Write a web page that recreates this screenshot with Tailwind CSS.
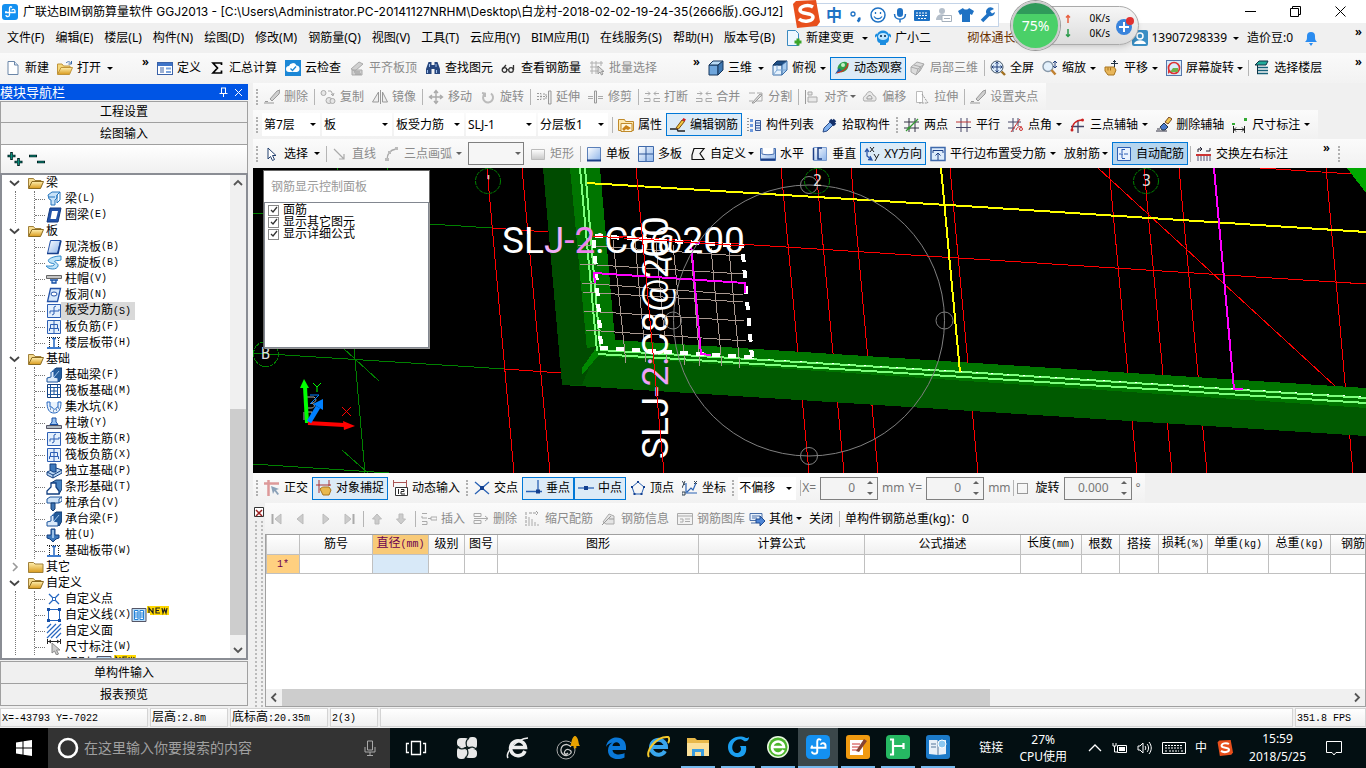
<!DOCTYPE html>
<html lang="zh-CN">
<head>
<meta charset="utf-8">
<title>广联达BIM钢筋算量软件 GGJ2013</title>
<script src="https://cdn.jsdelivr.net/npm/@tailwindcss/browser@4"></script>
</head>
<body class="relative flex h-screen flex-col overflow-hidden bg-[#f0f0f0] font-['Noto_Sans','Noto_Sans_CJK_SC',sans-serif] text-xs leading-4 text-black">

<svg class="absolute h-0 w-0" aria-hidden="true">
  <defs>
    <linearGradient id="gb" x1="0" y1="0" x2="1" y2="1"><stop offset="0" stop-color="#fff"/><stop offset="1" stop-color="#8db4ea"/></linearGradient>
    <linearGradient id="gy" x1="0" y1="0" x2="0" y2="1"><stop offset="0" stop-color="#fff0b0"/><stop offset="1" stop-color="#d99a1c"/></linearGradient>
    <linearGradient id="gg" x1="0" y1="0" x2="0" y2="1"><stop offset="0" stop-color="#ffffff"/><stop offset="1" stop-color="#c8c8c8"/></linearGradient>
  </defs>
  <symbol id="app" viewBox="0 0 16 16"><rect width="16" height="16" rx="3" fill="#1490f0"/><path d="M10 3.500C8.500 2 7.500 3 7.500 4.500V11c0 2-3.500 2-3.500 0M3 8.500h10V7c0-2-3-2-3-.5M4 8.500V7" fill="none" stroke="#fff" stroke-width="1.300"/></symbol>
  <symbol id="new" viewBox="0 0 16 16"><path d="M3 1.500h6.500l3.500 3.500v9.500H3z" fill="#fff" stroke="#6b86a8"/><path d="M9.500 1.500V5H13" fill="#dce8f6" stroke="#6b86a8"/></symbol>
  <symbol id="open" viewBox="0 0 16 16"><path d="M.5 14V4h4.500l1.500 2H13v2" fill="#f5d77a" stroke="#c0943a"/><path d="M.5 14.500 4 7.500h11.500L12.500 14.500z" fill="url(#gy)" stroke="#c0943a"/><path d="M9 3c2-2 4-1.500 5 .5M14.500 1v3h-3" fill="none" stroke="#3a6aa8"/></symbol>
  <symbol id="def" viewBox="0 0 16 16"><rect x=".5" y="2.500" width="15" height="12" fill="#fff" stroke="#3a62a8"/><path d="M1 3h14v3H1z" fill="#3f74c8"/><path d="M3 8h4M3 10h4M3 12h4" stroke="#3a62a8"/><path d="M9 7.500h5v2H9zM9 11h5v2H9z" fill="#7ba4dc"/></symbol>
  <symbol id="sigma" viewBox="0 0 16 16"><path d="M12.500 5V3H4l4.500 5L4 13h8.500v-2.500" fill="none" stroke="#000" stroke-width="1.700"/></symbol>
  <symbol id="cloud" viewBox="0 0 16 16"><rect width="16" height="16" fill="#1b87d6"/><path d="M4 12a3 3 0 0 1 0-6 4 4 0 0 1 7.500-.5A3.300 3.300 0 0 1 12 12z" fill="#fff"/><path d="m5.500 8.500 2 2 3.500-4" fill="none" stroke="#1b87d6" stroke-width="1.300"/></symbol>
  <symbol id="align" viewBox="0 0 16 16"><path d="m2 9 8-7 4 2-8 7zM3 10h10v5H3z" fill="#d0d0d0" stroke="#aaa"/><path d="M5 12h6M6 14h6" stroke="#999"/></symbol>
  <symbol id="bino" viewBox="0 0 16 16"><path d="M3.500 2h3v3h3V2h3l2.500 7v5H9.500V9h-3v5H1V9z" fill="#28477e"/><path d="M2.500 10v3M11.500 10v3M4.500 4v3M11 4v3" stroke="#9fc0ee"/></symbol>
  <symbol id="glass" viewBox="0 0 16 16"><g fill="none" stroke="#333" stroke-width="1.300"><circle cx="3.500" cy="10" r="2.300"/><circle cx="10" cy="10" r="2.300"/><path d="M6 9.500 7.500 10M1.500 9 5 5M12.500 10V5"/></g></symbol>
  <symbol id="batch" viewBox="0 0 16 16"><path d="M1 3h13M1 7h8M1 11h8M3 1v13M7 1v13M12 1v5" fill="none" stroke="#b0b0b0"/><path d="M9 6v8l2-2 1.500 3 1.500-1-1.500-2.500H15z" fill="#ddd" stroke="#999"/></symbol>
  <symbol id="cube" viewBox="0 0 16 16"><path d="M1 5h9v10H1z" fill="#6fa6dc" stroke="#16365c"/><path d="m1 5 4-4h10l-5 4z" fill="#b9dbf6" stroke="#16365c"/><path d="m10 5 5-4v9l-5 5z" fill="#3f78b2" stroke="#16365c"/></symbol>
  <symbol id="cube2" viewBox="0 0 16 16"><path d="M1 5h9v10H1z" fill="#e6f2fd" stroke="#3a6ea8"/><path d="m1 5 4-4h10l-5 4z" fill="#1e4f86" stroke="#16365c"/><path d="m10 5 5-4v9l-5 5z" fill="#a9cdf0" stroke="#3a6ea8"/><path d="M1 15 5 10h9M5 10V5" fill="none" stroke="#7ba6d4"/></symbol>
  <symbol id="orbit" viewBox="0 0 16 16"><ellipse cx="9" cy="7" rx="6" ry="4.500" transform="rotate(-40 9 7)" fill="#2fa04a"/><circle cx="9" cy="5" r="2" fill="#c5f0c5"/><path d="M1 14 5 8l3 3z" fill="#1d5ca8"/><path d="M3 13C9 12 14 8 14 3" fill="none" stroke="#cc3322" stroke-width="1.200"/></symbol>
  <symbol id="cubeg" viewBox="0 0 16 16"><g fill="#dcdcdc" stroke="#aaa"><path d="M1 7 7 2l7 2-4 7-4 4-5-3z"/><path d="m1 7 7 2 6-5M8 9l-2 6M4 5l7 2-3 6" fill="none"/></g></symbol>
  <symbol id="full" viewBox="0 0 16 16"><circle cx="7" cy="7" r="6" fill="#dcecfb" stroke="#456"/><path d="M7 2v10M2 7h10M5.500 3.500 7 2l1.500 1.500M5.500 10.500 7 12l1.500-1.500M3.500 5.500 2 7l1.500 1.500M10.500 5.500 12 7l-1.500 1.500" fill="none" stroke="#23407c"/><path d="m11.500 11.500 3.500 3.500" stroke="#a07020" stroke-width="2.400"/></symbol>
  <symbol id="zoom" viewBox="0 0 16 16"><circle cx="6" cy="6.500" r="5" fill="#e4f1fc" stroke="#8899aa" stroke-width="1.400"/><path d="m9.500 10 4 4.500" stroke="#c08030" stroke-width="2.500"/><path d="M13 1v7M11 3l2-2 2 2M11 6l2 2 2-2" fill="none" stroke="#23407c"/></symbol>
  <symbol id="pan" viewBox="0 0 16 16"><path d="M1 7h9l2 3-2 5H4L1 11z" fill="#e8b65a" stroke="#a8741e"/><path d="M4 7.500v3M6.500 7.500v3" stroke="#a8741e"/><path d="M10.500 0v7M7 3.500h7M9 2l1.500-1.500L12 2" fill="none" stroke="#234"/></symbol>
  <symbol id="srot" viewBox="0 0 16 16"><rect x=".5" y=".5" width="15" height="15" fill="#d8ecfb" stroke="#57a"/><circle cx="8" cy="8" r="5.500" fill="none" stroke="#d33" stroke-width="1.700"/><path d="M4 12 7 8h5v4z" fill="#6cb34a"/><path d="m2 10 3 1-3 3z" fill="#d33"/></symbol>
  <symbol id="floor" viewBox="0 0 16 16"><path d="m1 5 4-4h9l-2 4z" fill="#2a9" stroke="#134"/><path d="M3 7.500h11M3 10.500h11M3 13.500h11" stroke="#146078" stroke-width="1.500"/><path d="M3.500 5v9" stroke="#134"/></symbol>
  <symbol id="pencil" viewBox="0 0 16 16"><path d="M0 14h10M1 12.500h3" stroke="#999"/><path d="m6 10 7-8 3-1-1 4-7 7z" fill="#d0d0d0" stroke="#999"/></symbol>
  <symbol id="copy" viewBox="0 0 16 16"><g fill="#e6e6e6" stroke="#aaa"><circle cx="3.500" cy="4" r="2.500"/><circle cx="9" cy="11.500" r="3"/><circle cx="12.500" cy="12" r="2.500"/></g><path d="M8 2h3l2 4M11 5l2 2 1-3" fill="none" stroke="#aaa"/></symbol>
  <symbol id="mirror" viewBox="0 0 16 16"><path d="M6.500 3v10h-6zM10.500 3v10h5z" fill="#eee" stroke="#999"/><path d="M8.500 1v14" stroke="#999"/></symbol>
  <symbol id="move" viewBox="0 0 16 16"><path d="M8 2v12M2 8h12M6 4l2-2.500L10 4M6 12l2 2.500 2-2.500M4 6 1.500 8 4 10M12 6l2.500 2L12 10" fill="none" stroke="#aaa" stroke-width="1.400"/></symbol>
  <symbol id="rot" viewBox="0 0 16 16"><path d="M4.500 5a5 5 0 1 0 6.500-.5M2 4l3 .5V8" fill="none" stroke="#bbb" stroke-width="2"/></symbol>
  <symbol id="extend" viewBox="0 0 16 16"><path d="M1 7.500h10M1 4.500h4v6H1M7 5h3v5H7" fill="none" stroke="#999" stroke-dasharray="2 1"/><path d="M12.500 2h2.500v13h-2.500z" fill="#eee" stroke="#999"/></symbol>
  <symbol id="trim" viewBox="0 0 16 16"><path d="M0 7.500h5M0 9.500h5M10 7.500h5M10 9.500h5" stroke="#aaa"/><path d="M6.500 2h2v12h-2z" fill="#eee" stroke="#999"/></symbol>
  <symbol id="brk" viewBox="0 0 16 16"><path d="M0 9.500h6v3H0M16 9.500h-6v3h6M1 4.500h5M4 2.500l2 2-2 2M15 4.500h-5M12 2.500l-2 2 2 2" fill="none" stroke="#aaa"/></symbol>
  <symbol id="split" viewBox="0 0 16 16"><path d="M1 4h6M9 4h5v8H8M1 12h4" fill="none" stroke="#aaa"/><path d="m4 14 8-9 2 1-8 8z" fill="#ddd" stroke="#999"/></symbol>
  <symbol id="alg" viewBox="0 0 16 16"><path d="M1.500 1v14" stroke="#999"/><path d="M4 3h4v3H4zM4 8h9v5H4z" fill="#e8e8e8" stroke="#aaa"/></symbol>
  <symbol id="offs" viewBox="0 0 16 16"><path d="M2 12c-2-4 1-5 2-6 2-5 6-4 7 0 3 1 4 4 2 6z" fill="#e8e8e8" stroke="#aaa"/><path d="M5 10c-1-3 5-6 5 0z" fill="none" stroke="#999"/></symbol>
  <symbol id="stretch" viewBox="0 0 16 16"><path d="M2.500 2.500h6v11h-6z" fill="#fff" stroke="#bbb"/><path d="m8 5 6 9H5" fill="none" stroke="#999" stroke-dasharray="2 1"/></symbol>
  <symbol id="prop" viewBox="0 0 16 16"><path d="M.5 2.500h6l1 2h8v9H.5z" fill="#ffe9b0" stroke="#c08a2a"/><path d="M3 6.500h11v8H3z" fill="#fff7dd" stroke="#c08a2a"/><path d="m4 12 4-4 5 3-3 2-2-1-2 2z" fill="#c98218"/></symbol>
  <symbol id="edit" viewBox="0 0 16 16"><path d="M0 12h7l1 2h7" fill="none" stroke="#222" stroke-width="1.300"/><path d="m6 11 6-8 2.500 1.500L8.500 12z" fill="#f3c63f" stroke="#7a4c10"/><path d="m12 3 1.500-2L16 2.500 14.500 4.500z" fill="#c22"/></symbol>
  <symbol id="list" viewBox="0 0 16 16"><path d="M2 1v14" stroke="#333" stroke-dasharray="1 2"/><path d="M4 2h3v3H4zM4 7h3v3H4zM4 12h3v3H4z" fill="#6f9be0"/><path d="M9.500 3.500h5v10h-5z" fill="#dce9fb" stroke="#36589a"/><path d="M10 6h4M10 8.500h4M10 11h4" stroke="#36589a"/></symbol>
  <symbol id="pick" viewBox="0 0 16 16"><path d="m1 15 1-4 6-6 3 3-6 6z" fill="#7fb0ee" stroke="#2a4a86"/><path d="m8 3 5 5M9.500 6.500 13 3" stroke="#14306a" stroke-width="3.500"/></symbol>
  <symbol id="ax2" viewBox="0 0 16 16"><path d="M5 1v14M11 1v14M0 5h15M0 11h15" stroke="#334"/><path d="m2 14 12-12" stroke="#393" stroke-width="1.300"/><circle cx="5" cy="11" r="1.500" fill="#393"/></symbol>
  <symbol id="axp" viewBox="0 0 16 16"><path d="M5 1v14M11 1v14M0 10.500h15" stroke="#446"/><path d="M0 5h15" stroke="#b33"/></symbol>
  <symbol id="axa" viewBox="0 0 16 16"><path d="M5 1v14M10 1v8M0 5h13M0 11h7" stroke="#446"/><path d="m3 15 9-13M8 13c1-3 3-4 6-3" fill="none" stroke="#c33"/><circle cx="13" cy="12" r="1.500" fill="none" stroke="#c33"/></symbol>
  <symbol id="ax3" viewBox="0 0 16 16"><path d="M8 3v13M1 9.500h13" stroke="#446" stroke-width="1.300"/><path d="M2 13C2 7 6 3 12 3" fill="none" stroke="#c22" stroke-width="1.300"/><circle cx="12.500" cy="3" r="1.500" fill="#c22"/><circle cx="2" cy="13" r="1.500" fill="#c22"/></symbol>
  <symbol id="axd" viewBox="0 0 16 16"><path d="M0 14h11M1 12h3" stroke="#334"/><path d="m4 10 4-4 4 4-3 3H6z" fill="#4a7acb" stroke="#234"/><path d="m9 5 4-5 3 2-4 5z" fill="#f0c650" stroke="#742"/></symbol>
  <symbol id="dim" viewBox="0 0 16 16"><path d="M1.500 9v7M12.500 9v7M2 12.500h10M4 10.500l-2 2 2 2M10 10.500l2 2-2 2" fill="none" stroke="#222"/><path d="M0 6h3v2H0zM12 1h3v3h-3z" fill="#3a3"/></symbol>
  <symbol id="cursor" viewBox="0 0 16 16"><path d="M4 2v11l2.500-2.500 2 4 2-1-2-4H12z" fill="#fff" stroke="#23406e"/></symbol>
  <symbol id="line" viewBox="0 0 16 16"><path d="m2 3 10 10M12 8v5H7" fill="none" stroke="#aaa" stroke-width="1.200"/></symbol>
  <symbol id="arc" viewBox="0 0 16 16"><path d="M3 14C3 8 6 4 12 3" fill="none" stroke="#aaa" stroke-width="1.300"/><path d="M1 12h4v3H1zM11 1h3v3h-3zM4 5h3v3H4z" fill="#bbb"/></symbol>
  <symbol id="rect" viewBox="0 0 16 16"><path d="M1.500 3.500h13v10h-13z" fill="url(#gg)" stroke="#bbb"/></symbol>
  <symbol id="slab" viewBox="0 0 16 16"><path d="M1.500 1.500h13v13h-13z" fill="url(#gb)" stroke="#5a7fb8"/><path d="M1 14.500h14" stroke="#1d3f86" stroke-width="2"/></symbol>
  <symbol id="slabs" viewBox="0 0 16 16"><path d="M.5.5h15v15H.5z" fill="url(#gb)" stroke="#3f6aac"/><path d="M8 1v14M1 8h14" stroke="#2d5596"/></symbol>
  <symbol id="poly" viewBox="0 0 16 16"><path d="M4 2.500h10l-4 5 4 6H2V9z" fill="none" stroke="#111" stroke-width="1.200"/></symbol>
  <symbol id="hor" viewBox="0 0 16 16"><path d="M.5 2.500h15v12H.5z" fill="url(#gb)" stroke="#3f6aac"/><path d="M2 2v6c4 1 8 1 12 0V2" fill="#fff" stroke="#4a70b0"/><path d="M1 13.500h14" stroke="#1d3f86" stroke-width="2"/></symbol>
  <symbol id="ver" viewBox="0 0 16 16"><path d="M1.500 1.500h13v13h-13z" fill="url(#gb)" stroke="#7a9cd0"/><path d="M10 2H6v11h4M1.500 2v12" fill="none" stroke="#1d3f86" stroke-width="1.500"/></symbol>
  <symbol id="xy" viewBox="0 0 16 16"><path d="M3 4v6l5 4M1 6l2-3 2 3M6 10l2 4-4-.5" fill="none" stroke="#2a55a8" stroke-width="1.300"/><path d="m6 1 4 5M10 1 6 6M10 8l2.500 4M15 8l-4 7" stroke="#222"/></symbol>
  <symbol id="par" viewBox="0 0 16 16"><path d="M1 1.500h14v13H1z" fill="#dcebfb" stroke="#3f6aac" stroke-width="1.500"/><path d="M3 7V4.500h10V7M8 7v7M5.500 9.500 8 7l2.500 2.500" fill="none" stroke="#1d3f86"/></symbol>
  <symbol id="auto" viewBox="0 0 16 16"><path d="M1.500 1.500h13v13h-13z" fill="#e8f3ff" stroke="#2d5fb4"/><path d="M6 3v10M3 8h9M6 3.500h3M6 12.500h3" fill="none" stroke="#2d5fb4" stroke-dasharray="4 1"/></symbol>
  <symbol id="swap" viewBox="0 0 16 16"><path d="M2 6V3h4M10 5h4V2M4 1l2 2-2 2" fill="none" stroke="#223"/><path d="M0 9h15" stroke="#c33" stroke-width="2"/><path d="M2 10v5M5 10v5M8 10v5M11 10v5M14 10v5" stroke="#557"/></symbol>
  <symbol id="ortho" viewBox="0 0 16 16"><path d="M0 3.500h15M4.500 0v16" stroke="#d99" stroke-width="2.500"/><path d="m7 6 2 8 1.500-3 3 4 1.500-1-3-4 3-1z" fill="#8ba1b8"/></symbol>
  <symbol id="osnap" viewBox="0 0 16 16"><path d="M3 0v13M0 5h15M13 0v6" stroke="#a33"/><path d="M4 9c2-2 3-2 4-2h5l2 3-2 5H7z" fill="#e8b94e" stroke="#a8741e"/></symbol>
  <symbol id="dyn" viewBox="0 0 16 16"><path d="M1.500 0v7M14.500 0v7M1 2.500h14" stroke="#a55"/><path d="M3.500 7.500h12v8h-12z" fill="#fff" stroke="#333"/><path d="M6.500 9v5M9 9.500h3v2H9v2.500h4" fill="none" stroke="#222"/></symbol>
  <symbol id="sx" viewBox="0 0 16 16"><path d="m1 2 14 12M15 2 1 14" stroke="#2a62b4" stroke-width="1.300"/><path d="M6 6h4v4H6z" fill="#123f90"/></symbol>
  <symbol id="sperp" viewBox="0 0 16 16"><path d="M0 11.500h16M12 0v12" stroke="#2a62b4" stroke-width="1.300"/><path d="M10 9.500h4v4h-4z" fill="#123f90"/></symbol>
  <symbol id="smid" viewBox="0 0 16 16"><path d="M0 8h16" stroke="#2a62b4" stroke-width="1.300"/><path d="M6 6h4v4H6z" fill="#123f90"/></symbol>
  <symbol id="spent" viewBox="0 0 16 16"><path d="m8 2 6 5-2.500 7h-7L2 7z" fill="none" stroke="#2a62b4"/><path d="M7 1h2v2H7zM1 6h2v2H1zM13 6h2v2h-2zM3.500 13h2v2h-2zM10.500 13h2v2h-2z" fill="#123f90"/></symbol>
  <symbol id="scoord" viewBox="0 0 16 16"><path d="M4 3v10h11M5 12l4-4 2 2 3-7" fill="none" stroke="#2a62b4" stroke-width="1.200"/><path d="m0 1 3 4M3 1 0 8M12 1l3 3M15 1l-3 3M0 12h3v3H0z" fill="none" stroke="#345"/></symbol>
  <symbol id="ins" viewBox="0 0 16 16"><path d="M1 2.500h5M1 5v2h5M1 10.500h5v3H1M10 6h6v3h-6zM7 7.500h3" fill="none" stroke="#aaa"/></symbol>
  <symbol id="del" viewBox="0 0 16 16"><path d="M1 2.500h7v3H1zM1 9.500h7v3H1zM1 7.500h14M12 5l3 2.500-3 2.500" fill="none" stroke="#aaa"/></symbol>
  <symbol id="scale" viewBox="0 0 16 16"><path d="M1 1v14M4 2h9M11 0l2 2-2 2" fill="none" stroke="#999" stroke-dasharray="3 1"/><path d="M4 6v9M7 8v7M10 11v4M13 13v2" stroke="#aaa"/></symbol>
  <symbol id="info" viewBox="0 0 16 16"><path d="m2 11 6-8 5 2v8H5z" fill="#e4e4e4" stroke="#aaa"/><path d="m1 14 9-9M8 8h5" stroke="#999"/></symbol>
  <symbol id="lib" viewBox="0 0 16 16"><path d="M.5 2.500h15v11H.5z" fill="#f2f2f2" stroke="#aaa"/><path d="M1 5h14M3 8h3v3H3M8 8h5M8 10.500h5" fill="none" stroke="#aaa"/></symbol>
  <symbol id="other" viewBox="0 0 16 16"><path d="M1 2.500h12v7H1z" fill="#e8f1fc" stroke="#4a6fa8"/><path d="M3 5h8M3 7h5M2 12h5" stroke="#4a6fa8"/><path d="M7 8h4V5l5 5-5 5v-3H7z" fill="#4f86d6" stroke="#1f4b92"/></symbol>
  <symbol id="first" viewBox="0 0 16 16"><path d="M3.500 3v10" stroke="#aaa" stroke-width="2"/><path d="M12 3v10L6 8z" fill="#ccc" stroke="#bbb"/></symbol>
  <symbol id="prev" viewBox="0 0 16 16"><path d="M10 3v10L4 8z" fill="#ccc" stroke="#bbb"/></symbol>
  <symbol id="up" viewBox="0 0 16 16"><path d="m8 3 4.500 5H10v5H6V8H3.500z" fill="#ccc" stroke="#bbb"/></symbol>

  <symbol id="fo" viewBox="0 0 16 16"><path d="M.5 13V3.500h5l1.500 2h6V8" fill="#f6dc90" stroke="#a0803a"/><path d="M.5 13.500 4 6.500h11.500L12.500 13.500z" fill="url(#gy)" stroke="#8a6a20"/></symbol>
  <symbol id="fc" viewBox="0 0 16 16"><path d="M.5 13.500V3.500h5l1.500 1.500h8v8.500z" fill="url(#gy)" stroke="#a0803a"/></symbol>
  <symbol id="t-beam" viewBox="0 0 16 16"><path d="m2 4 4-3h8l-3 3v3L9 9v5H5V9L3 8z" fill="#c8e2f8" stroke="#2475bd"/><path d="M11 4v8l3-3V1M3 6h6" fill="none" stroke="#2475bd"/></symbol>
  <symbol id="t-ring" viewBox="0 0 16 16"><path d="M4 1h11l-3 14H1z" fill="#2352a8" stroke="#123a80"/><path d="M6 4h6l-2 8H4.500z" fill="#fff"/></symbol>
  <symbol id="t-slab" viewBox="0 0 16 16"><path d="M4.500 1.500h10l-3 13h-10z" fill="url(#gb)" stroke="#2352a8"/><path d="M1 14.500h11l3-13" fill="none" stroke="#173f8c" stroke-width="1.500"/></symbol>
  <symbol id="t-spiral" viewBox="0 0 16 16"><path d="M15 1C8 1 0 4 3 7c2 2 7 1 5 3-1 1.500-5 1-8 1 3 4 11 4 12 0 1-3-5-4-3-5s4 0 6-1z" fill="#bfe4fa" stroke="#2d86c8"/></symbol>
  <symbol id="t-cap" viewBox="0 0 16 16"><path d="M.5 4.500h15v3H.5z" fill="#c4c4c4" stroke="#666"/><path d="M4 9h8M6 9v3h4V9" fill="#cfe3fa" stroke="#174fa5" stroke-width="1.300"/></symbol>
  <symbol id="t-hole" viewBox="0 0 16 16"><path d="M4.500 1.500h10l-3 13h-10z" fill="#d6e8fb" stroke="#2352a8" stroke-width="1.300"/><ellipse cx="8" cy="7" rx="3" ry="2" fill="#fff" stroke="#2352a8"/></symbol>
  <symbol id="t-rebar" viewBox="0 0 16 16"><path d="M1.500 1.500h13v13h-13z" fill="#e4f0fd" stroke="#2d5fb4"/><path d="M8 4v7M4 10.500V8h9v-2M8 4l2-1M6 12l2-1" fill="none" stroke="#2d5fb4"/></symbol>
  <symbol id="t-neg" viewBox="0 0 16 16"><path d="M1.500 1.500h13v13h-13z" fill="#e4f0fd" stroke="#2d5fb4"/><path d="M8 2v12M3.500 12V9.500h9V12M4.500 9V5.500h7V9" fill="none" stroke="#2d5fb4"/></symbol>
  <symbol id="t-band" viewBox="0 0 16 16"><path d="M1 2.500h14M3.500 3v9M12.500 3v9" stroke="#222" stroke-dasharray="1 1"/><path d="M8 3v9M6 3.500h4" stroke="#2466c0" stroke-width="1.500"/><path d="M1 12h14v2H1z" fill="#3f7dd0"/></symbol>
  <symbol id="t-fb" viewBox="0 0 16 16"><path d="m5 7 5-6h6v9l-3 5z" fill="#245d9c" stroke="#143c70"/><path d="M1 15v-4l4-1V5l3-1v6l4 1v4z" fill="#dbeafa" stroke="#1c559c"/><path d="M5 5l4-4M8 10l5-6" stroke="#9fc4ec"/></symbol>
  <symbol id="t-raft" viewBox="0 0 16 16"><path d="M1.500 1.500h13v13h-13z" fill="#fff" stroke="#123f80"/><path d="M4.500 2v12M11.500 2v12M2 4.500h12M2 11.500h12M8 5v6M5 8h6" stroke="#1c559c"/></symbol>
  <symbol id="t-pit" viewBox="0 0 16 16"><path d="M1 3h3v5h2c1 3 4 3 5 0h1V3h3M1 3c0 7 2 11 7 11s7-4 7-11" fill="#eaf3fd" stroke="#2466c0"/><path d="M4 10h1M7 12h1M10 11h1M12 9h1" stroke="#123f80"/></symbol>
  <symbol id="t-pier" viewBox="0 0 16 16"><path d="M.5 10.500h15v3H.5z" fill="#b4bcc4" stroke="#556"/><path d="m4 9.500 2-2.500V3h4v4l2 2.500z" fill="#9cc4f2" stroke="#174fa5"/></symbol>
  <symbol id="t-iso" viewBox="0 0 16 16"><path d="M1 9v3l6 3 9-5V7l-6-2z" fill="#bcd8f4" stroke="#123f80"/><path d="M4 1h6v8H7L4 7z" fill="#3e78bb" stroke="#123f80"/><path d="m1 9 6 3 9-5M7 12v3" fill="none" stroke="#123f80"/></symbol>
  <symbol id="t-strip" viewBox="0 0 16 16"><path d="m5 4 5-3h6v9l-3 5z" fill="#4681c0" stroke="#143c70"/><path d="M5 4h5v4l3 4v3H1v-3l4-4z" fill="#fff" stroke="#123f80" stroke-width="1.300"/></symbol>
  <symbol id="t-pc" viewBox="0 0 16 16"><path d="m1 4 3-2h12l-3 2v4H1z" fill="#d0e4f8" stroke="#1c559c"/><path d="M5 8h4v6l-2 2-2-2z" fill="#3f76b6" stroke="#143c70"/><path d="m13 8 3-2V2" fill="none" stroke="#1c559c"/></symbol>
  <symbol id="t-pile" viewBox="0 0 16 16"><path d="M5 2h4v6h4v3l-3 1-3 3-3-3-3-1V8h4z" fill="#3e78bb" stroke="#123f80"/><path d="M7 3v8" stroke="#bcd8f4" stroke-width="1.500"/></symbol>
  <symbol id="t-pt" viewBox="0 0 16 16"><path d="m3 3 10 10M13 3 3 13" stroke="#2466c0" stroke-width="1.300"/><path d="M6.500 6.500h3v3h-3z" fill="#fff" stroke="#2466c0"/></symbol>
  <symbol id="t-ln" viewBox="0 0 16 16"><path d="M2.500 2.500h11v11h-11z" fill="none" stroke="#2466c0"/><path d="M1 1h3v3H1zM12 1h3v3h-3zM1 12h3v3H1zM12 12h3v3h-3z" fill="#174fa5"/></symbol>
  <symbol id="t-area" viewBox="0 0 16 16"><path d="m1 5 4-4M1 10l9-9M1 15 15 1M5 15l10-10M10 15l5-5" stroke="#2466c0" stroke-width="1.200"/></symbol>
  <symbol id="t-dim" viewBox="0 0 16 16"><path d="M1.500 0v5M14.500 0v5M2 2.500h12M5 1 3 2.500 5 4M11 1l2 1.500L11 4" fill="none" stroke="#222"/><path d="M6 4v10l2.500-2 2 4 2-1-2-4H14z" fill="#ccc" stroke="#888"/></symbol>
  <symbol id="t-vid" viewBox="0 0 16 16"><path d="M1 1.500h14v13H1z" fill="#b9dcf8" stroke="#556"/><path d="M3.500 3.500h3.500v9H3.500zM9 3.500h3.500v9H9z" fill="#fff" stroke="#2080d8"/><path d="M4 6h3M4 8h3M4 10h3M9 6h3M9 8h3M9 10h3" stroke="#2080d8"/></symbol>
  <symbol id="t-new" viewBox="0 0 22 10"><path d="M0 0h22v9H3V7H0z" fill="#ffd800"/><path d="M2 7V2l4 5V2M13 2H9v5h4M9 4.500h3M15 2l1 5 1.500-4L19 7l1-5" fill="none" stroke="#222" stroke-width="1.200"/></symbol>
  <symbol id="sogou" viewBox="0 0 28 28"><path d="m1 4 3-3 20-1 4 22-3 4-20 2z" fill="#e84f1c"/><path d="M21 7C16 4 8 6 8 10c0 5 13 2 13 7 0 4-9 6-14 2" fill="none" stroke="#fff" stroke-width="3.500"/></symbol>
</svg>

<!-- Title bar -->
<header class="flex h-[23px] shrink-0 items-center bg-white pl-0.5 pr-5">
  <svg class="mr-[5px] size-4"><use href="#app"/></svg>
  <h1 class="flex-1 whitespace-nowrap font-['Inter','Noto_Sans_CJK_SC',sans-serif]">广联达BIM钢筋算量软件 GGJ2013 - [C:\Users\Administrator.PC-20141127NRHM\Desktop\白龙村-2018-02-02-19-24-35(2666版).GGJ12]</h1>
  <div class="flex gap-[34px] [&_svg]:size-[11px]">
    <button aria-label="最小化"><svg viewBox="0 0 11 11"><path d="M0 5.500h11" stroke="#000"/></svg></button>
    <button aria-label="还原"><svg viewBox="0 0 11 11"><path d="M.5 2.500h8v8h-8zM2.500 2V.5h8v8H9" fill="none" stroke="#000"/></svg></button>
    <button aria-label="关闭"><svg viewBox="0 0 11 11"><path d="m.5.5 10 10M10.500.5l-10 10" stroke="#000"/></svg></button>
  </div>
</header>

<!-- Menu bar -->
<nav class="flex h-[30px] shrink-0 items-center gap-[11px] whitespace-nowrap pl-[7px] [&_i]:border-x-[3px] [&_i]:border-t-[3px] [&_i]:border-x-transparent [&_i]:border-t-black">
  <button>文件(F)</button><button>编辑(E)</button><button>楼层(L)</button><button>构件(N)</button><button>绘图(D)</button><button>修改(M)</button><button>钢筋量(Q)</button><button>视图(V)</button><button>工具(T)</button><button>云应用(Y)</button><button>BIM应用(I)</button><button>在线服务(S)</button><button>帮助(H)</button><button>版本号(B)</button>
  <button class="flex items-center gap-1"><svg class="size-4" viewBox="0 0 16 16"><path d="M1.500.5h8l3 3v12h-11z" fill="#eef7ff" stroke="#3a8ac0"/><path d="M8.500 12h7M12 8.500v7" stroke="#3aa52a" stroke-width="3"/></svg>新建变更<i class="ml-1"></i></button>
  <button class="-ml-1 flex items-center gap-1"><svg class="size-4" viewBox="0 0 16 16"><path d="M2 5C3-1 13-1 14 5v4c0 3-2 4-3 4v2H5v-2c-1 0-3-1-3-4z" fill="#1b8de0"/><path d="M0 7l2-3M16 7l-2-3" stroke="#1b8de0" stroke-width="2"/><ellipse cx="8" cy="6.500" rx="5" ry="3.500" fill="#bfe6ff"/><circle cx="6" cy="6" r="1" fill="#024"/><circle cx="10" cy="6" r="1" fill="#024"/></svg>广小二</button>
  <div class="ml-auto flex items-center gap-1 pr-1">
    <a href="#" class="mr-[100px] text-[#6a3000]">砌体通长筋</a>
    <svg class="size-4" viewBox="0 0 16 16"><rect width="16" height="16" rx="2" fill="#3b8fc4"/><circle cx="8" cy="6" r="3" fill="none" stroke="#fff" stroke-width="1.500"/><path d="M2 14c1-5 11-5 12 0z" fill="#fff"/></svg>
    <button class="flex items-center gap-1.5">13907298339<i></i></button>
    <span class="ml-1">造价豆:0</span>
    <svg class="ml-1.5 size-4" viewBox="0 0 16 16"><path d="M2 12c2-2 2-3 2-6a4 4 0 0 1 8 0c0 3 0 4 2 6z" fill="#2a8cf0"/><path d="M6 13h4l-2 3z" fill="#2a8cf0"/></svg>
    <button class="mb-3 ml-8 font-semibold" aria-label="更多">»</button>
  </div>
</nav>

<!-- Main toolbar -->
<div class="flex h-[30px] shrink-0 items-center whitespace-nowrap bg-gradient-to-b from-[#fafafa] to-[#f2f2f2] [&_button]:flex [&_button]:h-[23px] [&_button]:items-center [&_button]:gap-1 [&_button]:border [&_button]:border-transparent [&_button]:px-[3px] [&_button:disabled]:text-[#8b8b8b] [&_button[aria-pressed=true]]:border-[#0078d7] [&_button[aria-pressed=true]]:bg-[#dcebf7] [&_i]:border-x-[3px] [&_i]:border-t-[3px] [&_i]:border-x-transparent [&_i]:border-t-black [&_svg]:size-4 [&_hr]:ml-0.5 [&_hr]:mr-px [&_hr]:h-4 [&_hr]:w-px [&_hr]:border-0 [&_hr]:bg-[#b5b5b5]">
  <div class="flex w-[153px] items-center pl-px">
    <button><svg><use href="#new"/></svg>新建</button><button><svg><use href="#open"/></svg>打开<i class="ml-0.5"></i></button><button class="mb-3 ml-auto font-semibold" aria-label="更多">»</button>
  </div>
  <div class="flex w-[551px] items-center">
    <button><svg><use href="#def"/></svg>定义</button><button><svg><use href="#sigma"/></svg>汇总计算</button><button><svg><use href="#cloud"/></svg>云检查</button><button disabled><svg><use href="#align"/></svg>平齐板顶</button><button><svg><use href="#bino"/></svg>查找图元</button><button><svg><use href="#glass"/></svg>查看钢筋量</button><button disabled><svg><use href="#batch"/></svg>批量选择</button><button class="mb-3 ml-auto font-semibold" aria-label="更多">»</button>
  </div>
  <div class="flex flex-1 items-center">
    <button><svg><use href="#cube"/></svg>三维<i class="ml-0.5"></i></button><button><svg><use href="#cube2"/></svg>俯视<i></i></button><button aria-pressed="true"><svg><use href="#orbit"/></svg>动态观察</button><button disabled><svg><use href="#cubeg"/></svg>局部三维</button><hr><button><svg><use href="#full"/></svg>全屏</button><button><svg><use href="#zoom"/></svg>缩放<i></i></button><button><svg><use href="#pan"/></svg>平移<i></i></button><button><svg><use href="#srot"/></svg>屏幕旋转<i class="-mx-px"></i></button><hr><button><svg><use href="#floor"/></svg>选择楼层</button><button class="mb-3 ml-auto font-semibold" aria-label="更多">»</button>
  </div>
</div>

<main class="flex min-h-0 flex-1">
  <!-- Module navigator -->
  <aside class="mr-[5px] mt-px flex w-[248px] shrink-0 flex-col pb-px [&_svg]:size-4 [&_svg]:shrink-0">
    <div class="flex h-4 shrink-0 items-center bg-[#0055e5] text-[13px] text-white">
      <h2 class="flex-1">模块导航栏</h2>
      <button aria-label="固定"><svg viewBox="0 0 16 16"><path d="M6.500 4v5M10.500 4v5M6 4h5M4.500 9.500h8M8.500 10v3" fill="none" stroke="#fff"/></svg></button>
      <button class="mr-px" aria-label="关闭"><svg viewBox="0 0 16 16"><path d="m4 5 7 7M11 5l-7 7" stroke="#fff"/></svg></button>
    </div>
    <button class="mt-px h-[22px] shrink-0 border border-[#a0a0a0] bg-[#f0f0f0]">工程设置</button>
    <button class="h-[22px] shrink-0 border border-t-0 border-[#a0a0a0] bg-[#f0f0f0]">绘图输入</button>
    <div class="flex h-[28px] shrink-0 items-center gap-1.5 border-x border-[#a0a0a0] bg-gradient-to-b from-white to-[#f0f0f0] px-1.5">
      <button aria-label="全部展开"><svg viewBox="0 0 16 16"><path d="M4.500 1v8M.5 5h8M11.500 7v8M7.500 11h8" stroke="#022" stroke-width="2.600"/><path d="M4.500 2v6M1.500 5h6M11.500 8v6M8.500 11h6" stroke="#0b8f7c"/></svg></button>
      <button aria-label="全部折叠"><svg viewBox="0 0 16 16"><path d="M0 5h8M8 11h8" stroke="#022" stroke-width="2.600"/><path d="M1 5h6M9 11h6" stroke="#0b8f7c"/></svg></button>
    </div>
    <div class="flex min-h-0 flex-1 border-2 border-[#8a8d94] bg-white">
      <ul class="min-w-0 flex-1 overflow-hidden whitespace-nowrap pl-1.5 [&_b]:font-['Liberation_Mono',monospace] [&_b]:text-[10px] [&_b]:font-normal [&_details>ul]:ml-[7px] [&_details>ul]:border-l [&_details>ul]:border-dotted [&_details>ul]:border-[#777] [&_details>ul]:pl-[18px] [&_summary]:flex [&_summary]:h-4 [&_summary]:items-center [&_summary]:gap-0.5 [&_summary>svg:first-child]:mr-0.5 [&_li_li]:flex [&_li_li]:h-4 [&_li_li]:items-center [&_li_li]:border-l [&_li_li]:border-dotted [&_li_li]:border-[#777] [&_li_li]:before:mr-px [&_li_li]:before:w-2.5 [&_li_li]:before:border-t [&_li_li]:before:border-dotted [&_li_li]:before:border-[#777] [&_li_li>svg:first-child]:mr-[3px]">
        <li><details open><summary><svg viewBox="0 0 16 16"><path d="m2 6 4.500 4L11 6" fill="none" stroke="#444" stroke-width="1.800"/></svg><svg><use href="#fo"/></svg>梁</summary><ul>
          <li><svg><use href="#t-beam"/></svg>梁<b>(L)</b></li><li><svg><use href="#t-ring"/></svg>圈梁<b>(E)</b></li></ul></details></li>
        <li><details open><summary><svg viewBox="0 0 16 16"><path d="m2 6 4.500 4L11 6" fill="none" stroke="#444" stroke-width="1.800"/></svg><svg><use href="#fo"/></svg>板</summary><ul>
          <li><svg><use href="#t-slab"/></svg>现浇板<b>(B)</b></li><li><svg><use href="#t-spiral"/></svg>螺旋板<b>(B)</b></li><li><svg><use href="#t-cap"/></svg>柱帽<b>(V)</b></li><li><svg><use href="#t-hole"/></svg>板洞<b>(N)</b></li><li><svg><use href="#t-rebar"/></svg><span class="-ml-1 bg-[#d9d9d9] px-1">板受力筋<b>(S)</b></span></li><li><svg><use href="#t-neg"/></svg>板负筋<b>(F)</b></li><li><svg><use href="#t-band"/></svg>楼层板带<b>(H)</b></li></ul></details></li>
        <li><details open><summary><svg viewBox="0 0 16 16"><path d="m2 6 4.500 4L11 6" fill="none" stroke="#444" stroke-width="1.800"/></svg><svg><use href="#fo"/></svg>基础</summary><ul>
          <li><svg><use href="#t-fb"/></svg>基础梁<b>(F)</b></li><li><svg><use href="#t-raft"/></svg>筏板基础<b>(M)</b></li><li><svg><use href="#t-pit"/></svg>集水坑<b>(K)</b></li><li><svg><use href="#t-pier"/></svg>柱墩<b>(Y)</b></li><li><svg><use href="#t-rebar"/></svg>筏板主筋<b>(R)</b></li><li><svg><use href="#t-neg"/></svg>筏板负筋<b>(X)</b></li><li><svg><use href="#t-iso"/></svg>独立基础<b>(P)</b></li><li><svg><use href="#t-strip"/></svg>条形基础<b>(T)</b></li><li><svg><use href="#t-pc"/></svg>桩承台<b>(V)</b></li><li><svg><use href="#t-fb"/></svg>承台梁<b>(F)</b></li><li><svg><use href="#t-pile"/></svg>桩<b>(U)</b></li><li><svg><use href="#t-band"/></svg>基础板带<b>(W)</b></li></ul></details></li>
        <li><details><summary><svg viewBox="0 0 16 16"><path d="m5 4 4 4-4 4" fill="none" stroke="#999" stroke-width="1.600"/></svg><svg><use href="#fc"/></svg>其它</summary></details></li>
        <li><details open><summary><svg viewBox="0 0 16 16"><path d="m2 6 4.500 4L11 6" fill="none" stroke="#444" stroke-width="1.800"/></svg><svg><use href="#fo"/></svg>自定义</summary><ul>
          <li><svg><use href="#t-pt"/></svg>自定义点</li><li><svg><use href="#t-ln"/></svg>自定义线<b>(X)</b><svg><use href="#t-vid"/></svg><span class="mb-2 flex h-2.5 w-[22px]"><svg class="h-2.5! w-[22px]!"><use href="#t-new"/></svg></span></li><li><svg><use href="#t-area"/></svg>自定义面</li><li><svg><use href="#t-dim"/></svg>尺寸标注<b>(W)</b></li></ul></details></li>
        <li><details><summary class="items-start!"><svg viewBox="0 0 16 16"></svg><svg><use href="#fc"/></svg><span class="ml-5">识别</span><svg class="ml-1"><use href="#t-vid"/></svg><svg class="h-2.5! w-[22px]!"><use href="#t-new"/></svg></summary></details></li>
      </ul>
      <div class="flex w-4 shrink-0 flex-col bg-[#f0f0f0]">
        <svg viewBox="0 0 16 16"><path d="m4 10 4-4 4 4" fill="none" stroke="#555" stroke-width="1.800"/></svg>
        <div class="flex-[217]"></div><div class="flex-[225] bg-[#cdcdcd]"></div><div class="flex-[7]"></div>
        <svg viewBox="0 0 16 16"><path d="m4 6 4 4 4-4" fill="none" stroke="#555" stroke-width="1.800"/></svg>
      </div>
    </div>
    <button class="mt-px h-[23px] shrink-0 border border-[#a0a0a0] bg-[#f0f0f0]">单构件输入</button>
    <button class="h-[22px] shrink-0 border border-t-0 border-[#a0a0a0] bg-[#f0f0f0]">报表预览</button>
  </aside>

  <section class="flex min-w-0 flex-1 flex-col whitespace-nowrap [&_.tb]:flex [&_.tb]:shrink-0 [&_.tb]:items-center [&_.tb]:self-start [&_.tb]:bg-gradient-to-b [&_.tb]:from-[#fbfbfb] [&_.tb]:to-[#f1f1f1] [&_.tb]:pl-[3px] [&_.tb]:pr-1 [&_.tb_button]:flex [&_.tb_button]:h-[23px] [&_.tb_button]:shrink-0 [&_.tb_button]:items-center [&_.tb_button]:gap-1 [&_.tb_button]:border [&_.tb_button]:border-transparent [&_.tb_button]:px-[3px] [&_.tb_button:disabled]:text-[#8b8b8b] [&_.tb_button[aria-pressed=true]]:border-[#0078d7] [&_.tb_button[aria-pressed=true]]:bg-[#dcebf7] [&_i]:shrink-0 [&_i]:border-x-[3px] [&_i]:border-t-[3px] [&_i]:border-x-transparent [&_i]:border-t-black [&_.tb_svg]:size-4 [&_.tb_svg]:shrink-0 [&_hr]:ml-0.5 [&_hr]:mr-px [&_hr]:h-4 [&_hr]:w-px [&_hr]:shrink-0 [&_hr]:border-0 [&_hr]:bg-[#b5b5b5] [&_.grip]:mr-0.5 [&_.grip]:h-4 [&_.grip]:shrink-0 [&_.grip]:border-l-2 [&_.grip]:border-dotted [&_.grip]:border-[#b0b0b0] [&_label]:flex [&_label]:items-center [&_select]:appearance-none">
    <div class="tb h-[27px]" role="toolbar">
      <span class="grip"></span>
      <button disabled><svg><use href="#pencil"/></svg>删除</button><hr><button disabled><svg><use href="#copy"/></svg>复制</button><button disabled><svg><use href="#mirror"/></svg>镜像</button><hr><button disabled><svg><use href="#move"/></svg>移动</button><button disabled><svg><use href="#rot"/></svg>旋转</button><hr><button disabled><svg><use href="#extend"/></svg>延伸</button><button disabled><svg><use href="#trim"/></svg>修剪</button><hr><button disabled><svg><use href="#brk"/></svg>打断</button><button disabled><svg><use href="#brk"/></svg>合并</button><button disabled><svg><use href="#split"/></svg>分割</button><hr><button disabled><svg><use href="#alg"/></svg>对齐<i class="-mx-0.5 opacity-60"></i></button><button disabled><svg><use href="#offs"/></svg>偏移</button><button disabled><svg><use href="#stretch"/></svg>拉伸</button><hr><button disabled><svg><use href="#pencil"/></svg>设置夹点</button>
    </div>
    <div class="tb h-[29px]" role="toolbar">
      <span class="grip"></span>
      <label class="ml-0.5 mr-0.5 h-[23px] w-[58px] bg-white pl-0.5"><select class="min-w-0 flex-1" aria-label="楼层"><option>第7层</option></select><i class="mr-1"></i></label>
      <label class="mr-0.5 h-[23px] w-[70px] bg-white pl-0.5"><select class="min-w-0 flex-1" aria-label="构件类型"><option>板</option></select><i class="mr-1"></i></label>
      <label class="mr-0.5 h-[23px] w-[70px] bg-white pl-0.5"><select class="min-w-0 flex-1" aria-label="构件"><option>板受力筋</option></select><i class="mr-1"></i></label>
      <label class="mr-0.5 h-[23px] w-[70px] bg-white pl-0.5"><select class="min-w-0 flex-1" aria-label="名称"><option>SLJ-1</option></select><i class="mr-1"></i></label>
      <label class="mr-0.5 h-[23px] w-[70px] bg-white pl-0.5"><select class="min-w-0 flex-1" aria-label="分层"><option>分层板1</option></select><i class="mr-1"></i></label>
      <hr><button><svg><use href="#prop"/></svg>属性</button><button aria-pressed="true"><svg><use href="#edit"/></svg>编辑钢筋</button><button><svg><use href="#list"/></svg>构件列表</button><button><svg><use href="#pick"/></svg>拾取构件</button>
      <span class="grip ml-0.5"></span>
      <button><svg><use href="#ax2"/></svg>两点</button><button><svg><use href="#axp"/></svg>平行</button><button><svg><use href="#axa"/></svg>点角<i></i></button><button><svg><use href="#ax3"/></svg>三点辅轴<i></i></button><button><svg><use href="#axd"/></svg>删除辅轴</button><button><svg><use href="#dim"/></svg>尺寸标注<i></i></button>
    </div>
    <div class="tb h-[29px] w-full" role="toolbar">
      <span class="grip"></span>
      <button><svg><use href="#cursor"/></svg>选择<i class="ml-0.5"></i></button><hr><button disabled><svg><use href="#line"/></svg>直线</button><button disabled><svg><use href="#arc"/></svg>三点画弧<i class="opacity-60"></i></button>
      <label class="mx-0.5 h-[23px] w-[56px] border border-[#808080] bg-[#f6f6f6]"><select class="min-w-0 flex-1" disabled aria-label="绘制方式"><option></option></select><i class="mr-0.5 opacity-60"></i></label>
      <button disabled><svg><use href="#rect"/></svg>矩形</button><hr><button><svg><use href="#slab"/></svg>单板</button><button><svg><use href="#slabs"/></svg>多板</button><button><svg><use href="#poly"/></svg>自定义<i class="-mx-0.5"></i></button><button><svg><use href="#hor"/></svg>水平</button><button><svg><use href="#ver"/></svg>垂直</button><button aria-pressed="true"><svg><use href="#xy"/></svg>XY方向</button><button><svg><use href="#par"/></svg>平行边布置受力筋<i></i></button><button>放射筋<i class="-ml-0.5"></i></button><button class="bg-[#b5d5ee]!" aria-pressed="true"><svg><use href="#auto"/></svg>自动配筋</button><hr><button><svg><use href="#swap"/></svg>交换左右标注</button>
      <button class="mb-3 ml-auto font-semibold" aria-label="更多">»</button><span class="grip ml-1"></span><span class="w-5"></span>
    </div>

    <!-- Model viewport -->
    <div class="relative min-h-0 flex-1 bg-black">
      <svg class="absolute inset-0 h-full w-full" viewBox="253 168 1113 305" preserveAspectRatio="xMidYMid slice" fill="none">
        <g shape-rendering="crispEdges">
          <g stroke="#008000"><path d="M337 168v3M387 168v3M253 213l10 1M429 224l63 4M253 353l252 16M343 348l36 33M354 348l11 125M342 450l26 23M253 464l136 9"/><circle cx="266" cy="354" r="12.500" stroke-dasharray="3 1"/></g>
          <g stroke="#f00"><path d="M492 228l56 4M613 236l753 48M505 369l56 4M487 168l27 305M522 168l28 305M636 168l28 305M781 168l28 305M816 168l28 305M851 168l27 305M950 168l28 305M1109 168l28 305M1144 168l28 305M1179 168l28 305M1326 168l27 305M1098 168l237 218M1260 168l92 6"/></g>
          <path d="M543 168h27l17 182-25 35z" fill="#004b00"/>
          <path d="M570 168h30l15 172 751 48v20L600 359l-13-9z" fill="#007500"/>
          <path d="M562 385l35-29 769 52v28z" fill="#005a00"/>
          <path d="M562 385l25-37 11-2-16 39z" fill="#004b00"/>
          <path d="M582 368l14-20 3 7-17 20z" fill="#008800"/>
          <path d="M1347 168h19v25z" fill="#00a800"/>
          <path d="M580 168l17 183M585 168l15 179M600 350l380 23 386 25M598 354l382 24 386 25" stroke="#7dff7d" stroke-width="2"/>
          <path d="M752 358l228 15 386 24" stroke="#fff" stroke-width="1" stroke-dasharray="2 14"/>
          <path d="M587 183l393 24 386 25M941 168l19 204" stroke="#ff0" stroke-width="2"/>
          <g stroke="#a89890"><path d="M578 245l163 11M580 264l163 10M582 283l161 12M583 292l160 10M584 311l160 10M586 330l160 11M613 240l13 123M635 242l11 120M656 243l11 120M673 245l12 120M711 248l11 118M729 250l11 118M691 250l9 116"/></g>
          <path d="M595 236l149 10M743 254l9 103M600 348l152 9M594 240l7 106" stroke="#fff" stroke-width="4" stroke-dasharray="8 8"/>
          <path d="M595 283l-1-10 151 10v10M700 243l-9 0 10 111 10 1M1214 168l20 221 9 0" stroke="#f0f" stroke-width="2"/>
        </g>
        <g font-family="Roboto, sans-serif" font-size="37" fill="#fff">
          <text x="502" y="253">SL<tspan fill="#f0b0f8">J</tspan><tspan fill="#ee82ee">-2</tspan>:C8@200</text>
          <text transform="translate(668 459) rotate(-90)">SLJ<tspan fill="#f0a0f8">-2:</tspan>C8@200</text>
        </g>
        <path d="M636 168l28 305M593 236l152 10" stroke="#f00" shape-rendering="crispEdges"/>
        <g stroke="#808080"><circle cx="809" cy="320.500" r="135.500"/><circle cx="673" cy="320.500" r="8.500"/><circle cx="944.500" cy="320.500" r="8.500"/><circle cx="809" cy="456" r="8.500"/><circle cx="809" cy="185" r="8.500"/></g>
        <g stroke="#008000" stroke-dasharray="4 1"><circle cx="488" cy="181" r="12.500"/><circle cx="817" cy="181" r="12.500"/><circle cx="1146" cy="181" r="12.500"/></g>
        <g font-family="DejaVu Sans Mono, monospace" font-size="15" fill="#ddd"><text x="484" y="187">'</text><text x="813" y="186">2</text><text x="1142" y="186">3</text><text x="261" y="359">B</text></g>
        <path d="M307 397h7c4 3 1 6-3 6 5 1 4 5 0 5h-4M305 412h7v8M304 420v-8" stroke="#aaa"/>
        <path d="M310 395h9l-9 9" stroke="#0080ff"/>
        <path d="M307 423l-2-36" stroke="#0f0" stroke-width="4"/><path d="M300 388l4-9 5 9z" fill="#0f0"/>
        <path d="M308 423l36 2" stroke="#f00" stroke-width="4"/><path d="M343 421l12 5-11 4z" fill="#f00"/>
        <path d="M309 422l9-15" stroke="#0080ff" stroke-width="5"/><path d="M313 404l10-5v11z" fill="#0080ff"/>
        <path d="M313 383l4 4 4-4M317 387v5" stroke="#0f0"/><path d="M342 407l9 9M351 407l-9 9" stroke="#f00"/>
      </svg>
      <div class="absolute left-2.5 top-0.5 flex h-[179px] w-[167px] flex-col border border-[#666] bg-white">
        <h3 class="flex h-[31px] shrink-0 items-center pl-[7px] text-[#999]">钢筋显示控制面板</h3>
        <div class="flex-1 border border-[#828790] pl-[3px] pt-px shadow-[1px_1px_0_#999] [&_input]:m-0 [&_input]:mr-1 [&_input]:size-[11px] [&_input]:appearance-none [&_input]:border [&_input]:border-[#888] [&_label]:relative [&_label]:h-3 [&_label]:leading-3 [&_svg]:absolute [&_svg]:left-0.5 [&_svg]:size-2">
          <label><input type="checkbox" checked><svg viewBox="0 0 8 8"><path d="m1 4 2 2 4-5" fill="none" stroke="#333" stroke-width="1.300"/></svg>面筋</label>
          <label><input type="checkbox" checked><svg viewBox="0 0 8 8"><path d="m1 4 2 2 4-5" fill="none" stroke="#333" stroke-width="1.300"/></svg>显示其它图元</label>
          <label><input type="checkbox" checked><svg viewBox="0 0 8 8"><path d="m1 4 2 2 4-5" fill="none" stroke="#333" stroke-width="1.300"/></svg>显示详细公式</label>
        </div>
      </div>
    </div>

    <div class="tb h-[30px]" role="toolbar">
      <span class="grip"></span>
      <button><svg><use href="#ortho"/></svg>正交</button><button aria-pressed="true"><svg><use href="#osnap"/></svg>对象捕捉</button><button><svg><use href="#dyn"/></svg>动态输入</button>
      <span class="grip ml-0.5"></span>
      <button><svg><use href="#sx"/></svg>交点</button><button aria-pressed="true"><svg><use href="#sperp"/></svg>垂点</button><button aria-pressed="true"><svg><use href="#smid"/></svg>中点</button><button><svg><use href="#spent"/></svg>顶点</button><button><svg><use href="#scoord"/></svg>坐标</button>
      <span class="grip ml-0.5"></span>
      <label class="ml-0.5 mr-0.5 h-[23px] w-[58px] bg-white pl-px"><select class="min-w-0 flex-1" aria-label="偏移"><option>不偏移</option></select><i class="mr-1"></i></label><hr>
      <label class="gap-1 text-[#777]">X=<span class="flex h-[23px] w-[58px] items-center border border-[#808080] bg-[#f4f4f4] pr-1"><input class="min-w-0 flex-1 bg-transparent pr-3 text-right" value="0"><span class="flex flex-col gap-2"><i class="rotate-180 opacity-60"></i><i class="opacity-60"></i></span></span>mm</label>
      <label class="ml-1 gap-1 text-[#777]">Y=<span class="flex h-[23px] w-[58px] items-center border border-[#808080] bg-[#f4f4f4] pr-1"><input class="min-w-0 flex-1 bg-transparent pr-3 text-right" value="0"><span class="flex flex-col gap-2"><i class="rotate-180 opacity-60"></i><i class="opacity-60"></i></span></span>mm</label><hr>
      <label class="ml-0.5 gap-2"><input type="checkbox" class="size-[11px] appearance-none border border-[#999]">旋转</label>
      <label class="ml-1 gap-1 text-[#777]"><span class="flex h-[23px] w-[68px] items-center border border-[#808080] bg-[#f4f4f4] pr-1"><input class="min-w-0 flex-1 bg-transparent pr-3 text-right" value="0.000" aria-label="旋转角度"><span class="flex flex-col gap-2"><i class="rotate-180 opacity-60"></i><i class="opacity-60"></i></span></span>°</label>
    </div>

    <!-- Rebar table -->
    <div class="flex h-[204px] shrink-0">
      <div class="flex w-3 shrink-0 flex-col items-center gap-1 pt-1">
        <button aria-label="关闭面板"><svg class="size-2.5" viewBox="0 0 10 10"><path d="M.5.5h9v9h-9z" fill="#fff" stroke="#333"/><path d="m2 3 6 6M8 3 2 9" stroke="#922" stroke-width="1.500"/></svg></button>
        <div class="w-2 flex-1 border-x-2 border-dotted border-[#bbb]"></div>
      </div>
      <div class="flex min-w-0 flex-1 flex-col">
        <div class="tb h-[31px] w-full pl-0!" role="toolbar">
          <button disabled aria-label="首条"><svg><use href="#first"/></svg></button><button disabled aria-label="上一条"><svg><use href="#prev"/></svg></button><button disabled aria-label="下一条"><svg class="rotate-180"><use href="#prev"/></svg></button><button disabled aria-label="末条"><svg class="rotate-180"><use href="#first"/></svg></button><hr><button disabled aria-label="上移"><svg><use href="#up"/></svg></button><button disabled aria-label="下移"><svg class="rotate-180"><use href="#up"/></svg></button><hr><button disabled><svg><use href="#ins"/></svg>插入</button><button disabled><svg><use href="#del"/></svg>删除</button><button disabled><svg><use href="#scale"/></svg>缩尺配筋</button><button disabled><svg><use href="#info"/></svg>钢筋信息</button><button disabled><svg><use href="#lib"/></svg>钢筋图库</button><button class="-ml-1"><svg><use href="#other"/></svg>其他<i class="-mx-px"></i></button><button>关闭</button><hr><span class="ml-1">单构件钢筋总重(kg)：0</span>
        </div>
        <div class="flex min-h-0 flex-1 flex-col border border-[#a0a0a0] bg-white">
          <div class="flex-1 overflow-hidden">
            <table class="w-[1163px] table-fixed border-collapse [&_td]:h-[19px] [&_td]:border [&_td]:border-[#c0c0c0] [&_th]:h-[19px] [&_th]:border [&_th]:border-t-0 [&_th]:border-[#c0c0c0] [&_th]:p-0 [&_th]:font-normal [&_b]:font-['Liberation_Mono',monospace] [&_b]:text-[10px] [&_b]:font-normal">
              <colgroup><col class="w-[33px]"><col class="w-[73px]"><col class="w-[56px]"><col class="w-[36px]"><col class="w-[33px]"><col class="w-[201px]"><col class="w-[166px]"><col class="w-[156px]"><col class="w-[61px]"><col class="w-[38px]"><col class="w-[39px]"><col class="w-[49px]"><col class="w-[61px]"><col class="w-[62px]"><col class="w-[99px]"></colgroup>
              <thead class="bg-gradient-to-b from-white to-[#f0f0f0]"><tr><th></th><th>筋号</th><th class="bg-[#f8ca78] text-[#6a0050]">直径<b>(mm)</b></th><th>级别</th><th>图号</th><th>图形</th><th>计算公式</th><th>公式描述</th><th>长度<b>(mm)</b></th><th>根数</th><th>搭接</th><th>损耗<b>(%)</b></th><th>单重<b>(kg)</b></th><th>总重<b>(kg)</b></th><th class="pl-2.5! text-left">钢筋归类</th></tr></thead>
              <tbody><tr><th class="bg-[#ffd080] text-[#6a0050]"><b>1*</b></th><td></td><td class="border-l-black! bg-[#d8e9f8]"></td><td></td><td></td><td></td><td></td><td></td><td></td><td></td><td></td><td></td><td></td><td></td><td></td></tr></tbody>
            </table>
          </div>
          <div class="flex h-[17px] shrink-0 bg-[#f0f0f0]">
            <svg class="size-4" viewBox="0 0 16 16"><path d="m10 4.500-4 4 4 4" fill="none" stroke="#555" stroke-width="1.800"/></svg>
            <div class="flex-[705] bg-[#cdcdcd]"></div><div class="flex-[358]"></div>
            <svg class="size-4" viewBox="0 0 16 16"><path d="m6 4.500 4 4-4 4" fill="none" stroke="#555" stroke-width="1.800"/></svg>
          </div>
        </div>
      </div>
    </div>
  </section>
</main>

<!-- Status bar -->
<footer class="flex h-[21px] shrink-0 gap-0.5 whitespace-nowrap pb-px pt-px [&_b]:font-['Liberation_Mono',monospace] [&_b]:text-[10px] [&_b]:font-normal [&_div]:border [&_div]:border-[#d4d4d4] [&_div]:bg-gradient-to-b [&_div]:from-white [&_div]:to-[#f0f0f0] [&_div]:pl-px">
  <div class="w-[148px]"><b>X=-43793 Y=-7022</b></div><div class="w-[78px]">层高<b>:2.8m</b></div><div class="w-[98px]">底标高<b>:20.35m</b></div><div class="w-[48px]"><b>2(3)</b></div><div class="flex-1"></div><div class="w-[71px]"><b>351.8 FPS</b></div>
</footer>

<!-- Taskbar -->
<nav class="flex h-10 shrink-0 items-center bg-[#030f12] text-white [&_button]:flex [&_button]:h-10 [&_button]:shrink-0 [&_button]:items-center [&_button]:justify-center">
  <button class="w-12 bg-black" aria-label="开始"><svg class="size-4" viewBox="0 0 16 16"><path d="m0 2.500 6.500-1V7.500H0zM7.500 1.300 16 0v7.500H7.500zM0 8.500h6.500v6L0 13.500zM7.500 8.500H16V16l-8.500-1.300z" fill="#fff"/></svg></button>
  <label class="flex h-10 w-[342px] items-center bg-[#333] pl-2 pr-3">
    <svg class="size-6" viewBox="0 0 24 24"><circle cx="12" cy="12" r="9" fill="none" stroke="#fff" stroke-width="2.600"/></svg>
    <input class="ml-1 min-w-0 flex-1 bg-transparent text-sm placeholder:text-[#a0a0a0]" placeholder="在这里输入你要搜索的内容" aria-label="搜索">
    <svg class="size-4" viewBox="0 0 16 16"><path d="M5.500 1h5v9h-5zM3 7v5h10V7M8 12v3.500M5 15.500h6" fill="none" stroke="#aaa"/></svg>
  </label>
  <div class="flex [&_button]:w-[51px] [&_svg]:size-6">
    <button aria-label="任务视图"><svg viewBox="0 0 24 24"><path d="M7.500 5.500h9v13h-9zM5 7.500H2.500v9H5M19 7.500h2.500v9H19" fill="none" stroke="#fff" stroke-width="1.300"/></svg></button>
    <button aria-label="应用"><svg viewBox="0 0 24 24"><g fill="#e8e8e8"><rect x="2" y="2" width="12" height="9" rx="4"/><rect x="13" y="1" width="9" height="12" rx="4"/><rect x="2" y="11" width="9" height="12" rx="4"/><rect x="10" y="13" width="12" height="9" rx="4"/></g><path d="M14 2c-4 3-3 6-2 10s2 7-2 10M2 10c3 4 6 3 10 2s7-2 10 2" fill="none" stroke="#122" stroke-width="1.300"/></svg></button>
    <button aria-label="浏览器"><svg viewBox="0 0 24 24"><path d="M19 15a7.500 7.500 0 1 1 .5-3.500H6" fill="none" stroke="#eee" stroke-width="3.500"/><path d="M2 22C-1 17 10 3 22 2" fill="none" stroke="#eee" stroke-width="1.500"/></svg></button>
    <button aria-label="提醒"><svg class="size-7!" viewBox="0 0 28 28"><circle cx="11" cy="16" r="9" fill="none" stroke="#aaa"/><path d="M16 13a5.500 5.500 0 1 0 0 6c1-3-4-5-6-2s1 4 3 2" fill="none" stroke="#ccc" stroke-width="1.300"/><path d="M15 12c2-2 1-8 4.500-10h1C24 4 23 10 25 12z" fill="#e8a200"/><circle cx="20" cy="13" r="1.500" fill="#e8a200"/></svg></button>
  </div>
  <button class="w-11" aria-label="Edge"><svg class="size-6" viewBox="0 0 24 24"><path d="M2 11C3 4 8 1.500 12.500 1.500 19 1.500 22 6 22 11v3H8.500c.5 5 7.500 5.500 12 3v4.500C13 25 4 22.500 4 14.500c0-4 2-6.500 4.500-8C5 7 3 9 2 11zm6.500-1h7.500c0-5-7-5-7.500 0z" fill="#0a78d8"/></svg></button>
  <div class="flex [&_button]:mx-[3px] [&_button]:w-[34px] [&_button]:border-b-2 [&_button]:border-[#76b9ed] [&_svg]:size-6">
    <button class="border-transparent!" aria-label="IE"><svg viewBox="0 0 24 24"><path d="M19 16a7.500 7.500 0 1 1 1-4H6" fill="none" stroke="#39a5ec" stroke-width="4"/><path d="M3 22C-1 17 10 1 22 2c2 1 1 5 0 6" fill="none" stroke="#f4c92c" stroke-width="2"/></svg></button>
    <button aria-label="文件资源管理器"><svg viewBox="0 0 24 24"><path d="M1 3h8l2 2h12v16H1z" fill="#e8b84a"/><path d="M1 8h22v13H1z" fill="#fbe09a"/><path d="M6 21v-7h12v7h-3v-4H9v4z" fill="#3a9ee0"/></svg></button>
    <button aria-label="G应用"><svg viewBox="0 0 24 24"><path d="M20 3C12-1 2 4 2 12c0 7 6 11 12 10 5-1 7-5 6-11h-6c2 3 1 6-2 7-5 1-7-5-5-9 2-5 8-6 11-3 2 1 5 0 5-4-1 1-2 1-3 1z" fill="#1b9ff0"/></svg></button>
    <button aria-label="360浏览器"><svg viewBox="0 0 24 24"><circle cx="12" cy="12" r="11" fill="#e8f8e0"/><circle cx="12" cy="12" r="9.500" fill="#4cb52c"/><path d="M17.500 15a6 6 0 1 1 .5-3H7" fill="none" stroke="#fff" stroke-width="2.600"/></svg></button>
    <button class="mx-0! w-10! bg-[#3b474a]" aria-label="广联达"><svg><use href="#app"/></svg></button>
    <button aria-label="记事"><svg viewBox="0 0 24 24"><rect width="24" height="24" rx="3" fill="#f09a10"/><path d="M4 5h13v15H4z" fill="#fff"/><path d="M6 9h8M6 12h7M6 15h5" stroke="#c33"/><path d="m10 16 8-12 3 2-8 11z" fill="#843"/></svg></button>
    <button aria-label="F应用"><svg viewBox="0 0 24 24"><rect width="24" height="24" rx="4" fill="#26b862"/><path d="M7 4v16M7 11h11M17.500 8v6M4 4.500h4M4 19.500h4" stroke="#fff" stroke-width="2.200"/></svg></button>
    <button aria-label="图库"><svg viewBox="0 0 24 24"><rect width="24" height="24" rx="3" fill="#1c7ac8"/><path d="M3 5h8l1 1 8-1v14l-8 1-9-1z" fill="#e8f0f8"/><path d="M12 6v14M5 9h5M5 12h5" stroke="#579"/><circle cx="16" cy="9" r="4" fill="#8cc8f0" stroke="#fff"/></svg></button>
  </div>
  <div class="ml-auto flex items-center gap-3 pr-6 text-center [&_svg]:size-4">
    <span class="mr-1">链接</span>
    <span class="mr-2 leading-[17px]">27%<br>CPU使用</span>
    <div class="flex items-center gap-[9px]">
      <svg viewBox="0 0 16 16"><path d="m2 11 6-6 6 6" fill="none" stroke="#fff" stroke-width="1.300"/></svg>
      <svg viewBox="0 0 16 16"><path d="M5.500 5.500h9v7h-9zM1 3v3h3V3M2.500 6v6H5" fill="none" stroke="#fff"/><path d="M7 7h6v4H7z" fill="#fff"/></svg>
      <svg viewBox="0 0 16 16"><path d="M1 6h2l3-3v10l-3-3H1zM8 6c1 1 1 3 0 4M10 4c2 2 2 6 0 8M12 2c3 4 3 8 0 12" fill="none" stroke="#fff"/></svg>
      <svg class="w-6!" viewBox="0 0 24 16"><path d="M.5 2.500h23v11H.5z" fill="none" stroke="#fff"/><path d="M3 5.500h18M3 8h18M3 11h2M7 11h10M19 11h2" stroke="#fff" stroke-dasharray="2 1"/></svg>
      <span>中</span>
      <svg class="ml-px"><use href="#sogou"/></svg>
    </div>
    <span class="ml-1 leading-[18px]">15:59<br>2018/5/25</span>
    <button class="ml-2" aria-label="通知"><svg viewBox="0 0 16 16"><path d="M.5 1.500h15v11H10L8 15l-2-2.500H.5z" fill="none" stroke="#fff"/></svg></button>
  </div>
</nav>

<!-- Input method bar -->
<div class="absolute left-[804px] top-[3px] flex h-6 w-[195px] items-center gap-1.5 border border-[#c4d4e8] bg-white pl-[21px] text-[#1f72c4] [&_svg]:size-4">
  <span class="text-base font-bold">中</span>
  <svg viewBox="0 0 16 16"><circle cx="5" cy="7" r="2" fill="none" stroke="#1f72c4" stroke-width="1.300"/><path d="M11 10.500c1 2 0 3-1.500 4" fill="none" stroke="#1f72c4" stroke-width="2.600"/></svg>
  <svg viewBox="0 0 16 16"><circle cx="8" cy="8" r="7" fill="none" stroke="#1f72c4" stroke-width="1.500"/><path d="M5.500 5v2M10.500 5v2M4 9.500c2 3 6 3 8 0" fill="none" stroke="#1f72c4" stroke-width="1.300"/></svg>
  <svg viewBox="0 0 16 16"><rect x="5" y="1" width="6" height="9" rx="3" fill="#1f72c4"/><path d="M2.500 7c0 7 11 7 11 0M8 12v3.500" fill="none" stroke="#1f72c4" stroke-width="1.500"/></svg>
  <svg viewBox="0 0 16 16"><rect y="3" width="16" height="11" rx="1" fill="#1f72c4"/><path d="M2 6h12M2 8.500h12M4 11.500h8" stroke="#fff" stroke-dasharray="2 1"/></svg>
  <svg viewBox="0 0 16 16"><circle cx="6" cy="4" r="3" fill="#b5bfca"/><path d="M0 13c0-7 9-7 11-3v3z" fill="#b5bfca"/><path d="M6 8.500h9.500v6H6z" fill="#fff" stroke="#a5b0bc"/><path d="M8 11.500h6" stroke="#a5b0bc"/></svg>
  <svg viewBox="0 0 16 16"><path d="M5 1c1 2 5 2 6 0l5 3-2 4-2-1v8H4V7L2 8 0 4z" fill="#1f72c4"/></svg>
  <svg viewBox="0 0 16 16"><path d="m2 14 7-7" stroke="#1f72c4" stroke-width="3.500"/><path d="M14 2a4.500 4.500 0 1 0 1 3l-3 1.500L10 4z" fill="#1f72c4"/></svg>
</div>
<svg class="absolute left-[792px] top-0 size-7"><use href="#sogou"/></svg>

<!-- Network speed widget -->
<div class="absolute left-[1014px] top-1.5 flex h-[39px] w-[125px] items-center rounded-full border border-[#aaa] bg-gradient-to-b from-[#f6f6f6] to-[#dcdcdc] pl-[48px] pr-1 text-[11px] leading-4 shadow-md">
  <div class="absolute -left-1 -top-1.5 flex size-[49px] items-center justify-center rounded-full border-2 border-[#ccc] bg-gradient-to-b from-[#2f9a5a] from-25% to-[#4ad068] to-25% text-sm text-white ring-1 ring-[#999]">75%</div>
  <div class="flex flex-col gap-1"><svg class="size-2.5" viewBox="0 0 10 10"><path d="M5 9V1M3 3.500l2-2 2 2" fill="none" stroke="#e86040" stroke-width="1.500"/></svg><svg class="size-2.5" viewBox="0 0 10 10"><path d="M5 1v8M3 6.500l2 2 2-2" fill="none" stroke="#2a9a4a" stroke-width="1.500"/></svg></div>
  <div class="flex-1 pr-1.5 text-right text-[10px] leading-[15px]">0K/s<br>0K/s</div>
  <svg class="size-[18px]" viewBox="0 0 18 18"><circle cx="8" cy="10" r="8" fill="#3a84dc"/><path d="M8 5v10M3 10h10" stroke="#fff" stroke-width="2"/><circle cx="14" cy="4" r="4" fill="#e03030"/></svg>
</div>
</body>
</html>
